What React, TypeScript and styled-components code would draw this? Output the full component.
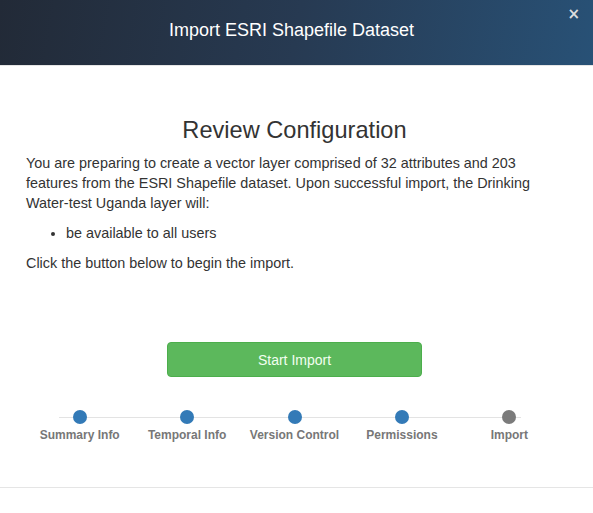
import styled, { createGlobalStyle } from "styled-components";

const GlobalStyle = createGlobalStyle`
  html, body {
    margin: 0;
    padding: 0;
    background: #fff;
  }
  body {
    font-family: "Liberation Sans", Arial, sans-serif;
    color: #333;
  }
`;

const Modal = styled.div`
  width: 593px;
  height: 513px;
  display: flex;
  flex-direction: column;
  background: #fff;
  overflow: hidden;
`;

const Header = styled.div`
  position: relative;
  height: 66px;
  flex-shrink: 0;
  display: flex;
  align-items: center;
  justify-content: center;
  background: linear-gradient(100deg, #222a37 0%, #273a52 50%, #285176 100%);
  border-bottom: 1px solid #e5e5e5;
  box-sizing: border-box;
`;

const Title = styled.h4`
  margin: 0 10px 4px 0;
  color: #fff;
  font-size: 18px;
  font-weight: 400;
  line-height: 1.1;
`;

const Close = styled.button`
  position: absolute;
  top: 4px;
  right: 13px;
  padding: 0;
  border: 0;
  background: none;
  color: #ddd;
  font-family: "DejaVu Sans", sans-serif;
  font-size: 15px;
  font-weight: 700;
  line-height: 20px;
  cursor: pointer;
`;

const Body = styled.div`
  flex: 1;
  padding: 51px 30px 0 26px;
  font-size: 14.4px;
  line-height: 20px;
`;

const Heading = styled.h2`
  margin: 0 0 10px;
  text-align: center;
  font-size: 23.6px;
  font-weight: 400;
  line-height: 26px;
  color: #333;
`;

const Paragraph = styled.p`
  margin: 0 0 10px;
`;

const List = styled.ul`
  margin: 0 0 10px;
  padding-left: 40px;
`;

const Actions = styled.div`
  display: flex;
  justify-content: center;
  margin-top: 69px;
`;

const PrimaryButton = styled.button`
  width: 255px;
  height: 35px;
  border: 1px solid #4cae4c;
  border-radius: 4px;
  background: #5cb85c;
  color: #f2fff0;
  font-family: "Liberation Sans", Arial, sans-serif;
  font-size: 14px;
  cursor: pointer;
`;

const Stepper = styled.div`
  position: relative;
  display: flex;
  margin-top: 33px;
`;

const Track = styled.div`
  position: absolute;
  top: 7px;
  left: 33px;
  right: 42px;
  height: 1px;
  background: #e3e3e3;
`;

const Step = styled.div`
  position: relative;
  flex: 1;
  display: flex;
  flex-direction: column;
  align-items: center;
`;

const Dot = styled.span<{ $done: boolean }>`
  width: 14px;
  height: 14px;
  border-radius: 50%;
  background: ${(p) => (p.$done ? "#337ab7" : "#7b7b7b")};
`;

const StepLabel = styled.span`
  margin-top: 3px;
  color: #777;
  font-size: 12px;
  font-weight: 700;
  line-height: 16px;
`;

const Footer = styled.div`
  height: 25px;
  flex-shrink: 0;
  border-top: 1px solid #e5e5e5;
`;

const steps = [
  { label: "Summary Info", done: true },
  { label: "Temporal Info", done: true },
  { label: "Version Control", done: true },
  { label: "Permissions", done: true },
  { label: "Import", done: false },
];

export default function App() {
  return (
    <>
      <GlobalStyle />
      <Modal>
        <Header>
          <Title>Import ESRI Shapefile Dataset</Title>
          <Close aria-label="Close">×</Close>
        </Header>
        <Body>
          <Heading>Review Configuration</Heading>
          <Paragraph>
            You are preparing to create a vector layer comprised of 32 attributes
            and 203 features from the ESRI Shapefile dataset. Upon successful
            import, the Drinking Water-test Uganda layer will:
          </Paragraph>
          <List>
            <li>be available to all users</li>
          </List>
          <Paragraph>Click the button below to begin the import.</Paragraph>
          <Actions>
            <PrimaryButton>Start Import</PrimaryButton>
          </Actions>
          <Stepper>
            <Track />
            {steps.map((s) => (
              <Step key={s.label}>
                <Dot $done={s.done} />
                <StepLabel>{s.label}</StepLabel>
              </Step>
            ))}
          </Stepper>
        </Body>
        <Footer />
      </Modal>
    </>
  );
}
